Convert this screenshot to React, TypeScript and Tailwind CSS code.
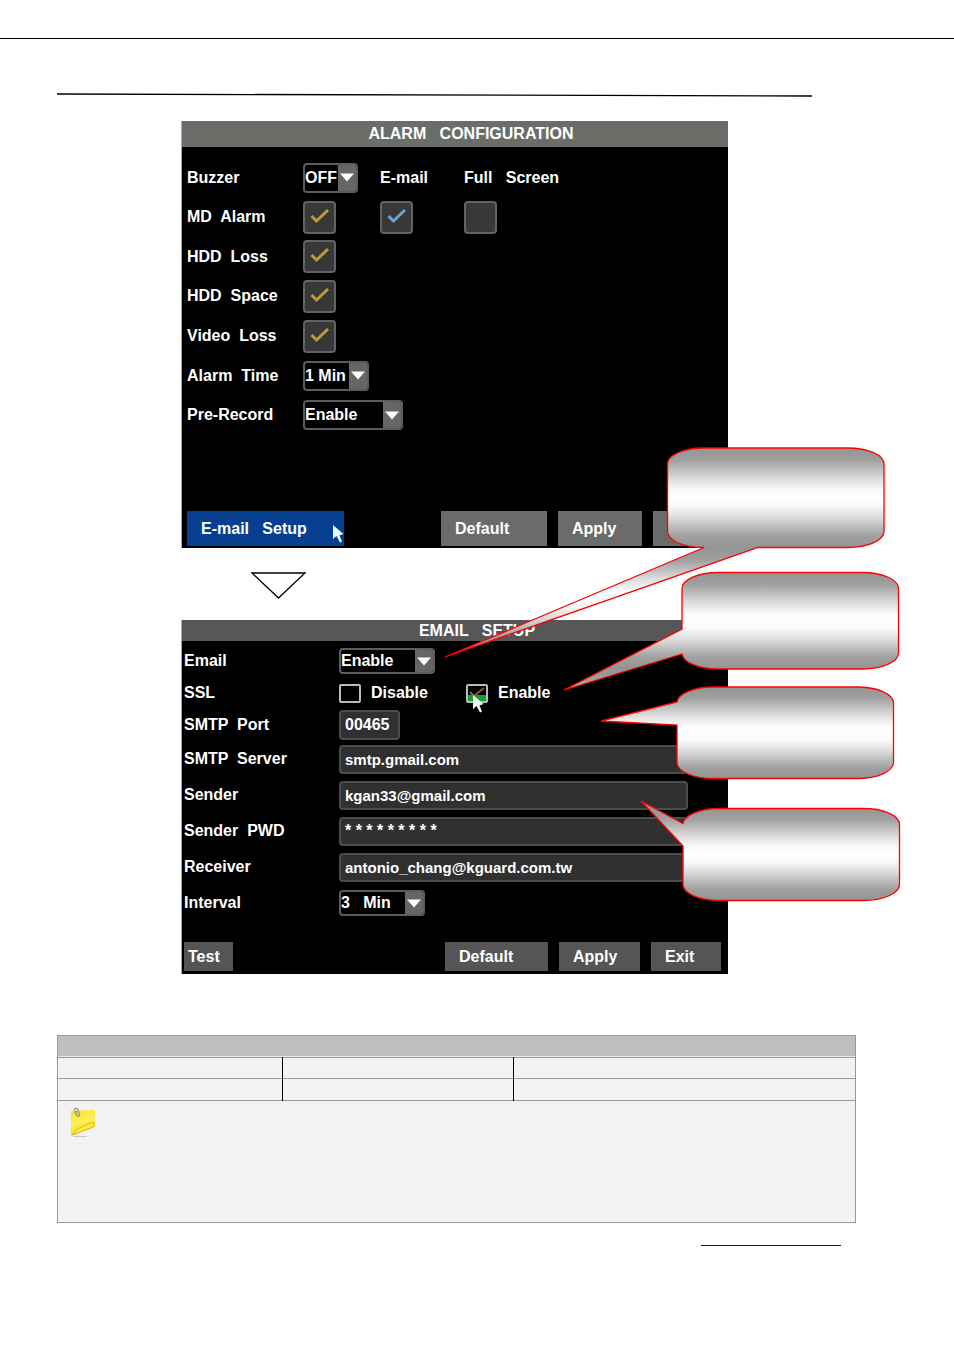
import type { ReactNode } from "react";
import clsx from "clsx";

type SelectBoxProps = {
  id: string;
  value: string;
  className: string;
};

function SelectBox({ id, value, className }: SelectBoxProps) {
  return (
    <div className={clsx("relative overflow-hidden rounded border-2 border-[#5c5c5c] bg-black", className)}>
      <select
        id={id}
        defaultValue={value}
        className="block h-full w-full appearance-none whitespace-pre bg-transparent font-bold text-white outline-none"
      >
        <option value={value}>{value}</option>
      </select>
      <span className="pointer-events-none absolute inset-y-0 right-0 flex w-[18px] items-center justify-center bg-[#666]">
        <svg width="14" height="9" viewBox="0 0 14 9">
          <path d="M0 0.500H14L7 8.500Z" fill="#fff" />
        </svg>
      </span>
    </div>
  );
}

type CheckBoxProps = {
  id: string;
  label?: string;
  checked?: boolean;
  color?: string;
};

function CheckBox({ id, label, checked = true, color = "#bd9a3c" }: CheckBoxProps) {
  return (
    <span className="relative block h-[33px] w-[33px]">
      <input
        id={id}
        type="checkbox"
        aria-label={label}
        defaultChecked={checked}
        className="peer block h-full w-full appearance-none rounded border-2 border-[#636363] bg-[#383838]"
      />
      <svg
        viewBox="0 0 33 33"
        className="pointer-events-none absolute inset-0 hidden peer-checked:block"
        fill="none"
        stroke={color}
        strokeWidth="3"
      >
        <path d="M8.500 15L13.500 20L25 9" />
      </svg>
    </span>
  );
}

function Cursor({ className }: { className: string }) {
  return (
    <svg width="12" height="18" viewBox="0 0 12 18" className={clsx("pointer-events-none absolute", className)}>
      <path d="M1 0V14L4.500 11L8 17.500L10 16.500L7.500 10.500L11.500 9Z" fill="#e4fbf6" />
    </svg>
  );
}

function Panel({ title, titleClass, children }: { title: string; titleClass: string; children: ReactNode }) {
  return (
    <section className="overflow-hidden border-l border-[#aaa] bg-black">
      <h2 className={clsx("flex items-center justify-center whitespace-pre font-bold", titleClass)}>{title}</h2>
      {children}
    </section>
  );
}

const lossRows = [
  { id: "hdd-loss", label: "HDD  Loss" },
  { id: "hdd-space", label: "HDD  Space" },
  { id: "video-loss", label: "Video  Loss" },
];

const alarmRow = "grid grid-cols-[116px_77px_84px_1fr] items-center whitespace-pre";

function AlarmPanel() {
  return (
    <Panel title="ALARM   CONFIGURATION" titleClass="h-[26px] bg-[#6b6d69] pl-8">
      <div className="mt-[11px] grid h-[277px] grid-rows-7 pl-[5px]">
        <div className={alarmRow}>
          <label htmlFor="buzzer">Buzzer</label>
          <SelectBox id="buzzer" value="OFF" className="h-[30px] w-[55px]" />
          <span>E-mail</span>
          <span>Full   Screen</span>
        </div>
        <div className={alarmRow}>
          <label htmlFor="md-alarm">MD  Alarm</label>
          <CheckBox id="md-alarm" />
          <CheckBox id="md-email" label="E-mail" color="#6aa6dc" />
          <CheckBox id="md-full" label="Full Screen" checked={false} />
        </div>
        {lossRows.map((row) => (
          <div key={row.id} className={alarmRow}>
            <label htmlFor={row.id}>{row.label}</label>
            <CheckBox id={row.id} />
          </div>
        ))}
        <div className={alarmRow}>
          <label htmlFor="alarm-time">Alarm  Time</label>
          <SelectBox id="alarm-time" value="1 Min" className="h-[30px] w-[66px]" />
        </div>
        <div className={alarmRow}>
          <label htmlFor="pre-record">Pre-Record</label>
          <SelectBox id="pre-record" value="Enable" className="h-[30px] w-[100px]" />
        </div>
      </div>
      <div className="mt-[76px] mb-0.5 flex h-[35px] gap-[11px] pr-[7px] pl-[5px]">
        <button className="relative mr-auto w-[157px] whitespace-pre bg-[#063f90] pl-3.5 text-left">
          E-mail   Setup
          <Cursor className="top-3.5 right-0" />
        </button>
        <button className="w-[106px] bg-[#6b6b6b] pl-3.5 text-left">Default</button>
        <button className="w-[84px] bg-[#6b6b6b] pl-3.5 text-left">Apply</button>
        <button className="w-[68px] bg-[#6b6b6b] pl-3.5 text-left">Exit</button>
      </div>
    </Panel>
  );
}

const textRows = [
  { id: "server", label: "SMTP  Server", value: "smtp.gmail.com", size: "text-[15px]" },
  { id: "sender", label: "Sender", value: "kgan33@gmail.com", size: "text-[15px]" },
  { id: "password", label: "Sender  PWD", value: "* * * * * * * * *", size: "text-base" },
  { id: "receiver", label: "Receiver", value: "antonio_chang@kguard.com.tw", size: "text-[15px]" },
];

const emailRow = "grid grid-cols-[155px_1fr] items-center whitespace-pre";
const field = "rounded border-2 border-[#4c4c4c] bg-[#303030] pl-1 font-bold text-white outline-none";

function EmailPanel() {
  return (
    <Panel title="EMAIL   SETUP" titleClass="h-[21px] bg-[#575757] pl-11">
      <div className="mt-1 pl-0.5">
        <div className={clsx(emailRow, "h-8")}>
          <label htmlFor="email">Email</label>
          <SelectBox id="email" value="Enable" className="h-[26px] w-[96px]" />
        </div>
        <div className={clsx(emailRow, "h-8")} role="radiogroup" aria-label="SSL">
          <span>SSL</span>
          <div className="flex items-center">
            <label className="flex w-[127px] items-center gap-2.5">
              <input type="radio" name="ssl" className="h-[19px] w-[22px] appearance-none rounded-xs border-2 border-[#bbb]" />
              Disable
            </label>
            <label className="relative flex items-center gap-2.5">
              <input
                type="radio"
                name="ssl"
                defaultChecked
                className="h-[19px] w-[22px] appearance-none rounded-xs border-2 border-[#bbb] bg-linear-to-b from-black from-60% to-[#16a02b] to-60%"
              />
              <svg width="22" height="19" className="pointer-events-none absolute left-0" fill="none" strokeWidth="2">
                <path d="M4 8L8 12" stroke="#4a7182" />
                <path d="M8 12L18 4" stroke="#a14b4b" />
              </svg>
              <Cursor className="top-3 left-1.5" />
              Enable
            </label>
          </div>
        </div>
        <div className={clsx(emailRow, "h-8")}>
          <label htmlFor="port">SMTP  Port</label>
          <input id="port" defaultValue="00465" className={clsx(field, "h-[30px] w-[61px] text-base")} />
        </div>
        {textRows.map((row) => (
          <div key={row.id} className={clsx(emailRow, "h-9")}>
            <label htmlFor={row.id}>{row.label}</label>
            <input id={row.id} defaultValue={row.value} className={clsx(field, row.size, "h-[29px] w-[349px]")} />
          </div>
        ))}
        <div className={clsx(emailRow, "h-9")}>
          <label htmlFor="interval">Interval</label>
          <SelectBox id="interval" value={"3\u00a0\u00a0\u00a0Min"} className="h-[26px] w-[86px]" />
        </div>
      </div>
      <div className="mt-[21px] mb-[3px] flex h-[29px] gap-[11px] pr-[7px] pl-0.5">
        <button className="mr-auto w-[49px] bg-[#555] pl-1 text-left">Test</button>
        <button className="w-[103px] bg-[#555] pl-3.5 text-left">Default</button>
        <button className="w-[81px] bg-[#555] pl-3.5 text-left">Apply</button>
        <button className="w-[70px] bg-[#555] pl-3.5 text-left">Exit</button>
      </div>
    </Panel>
  );
}

// speech balloons pointing at the e-mail fields
const balloons = [
  {
    top: 448,
    bottom: 548,
    d: "M703 448H848A36 16 0 0 1 884 464V531A36 16 0 0 1 848 547.500H758L445 657L704 547.500A36 16 0 0 1 667.500 531V464A36 16 0 0 1 703 448Z",
  },
  {
    top: 573,
    bottom: 669,
    d: "M718 572.500H862A36 16 0 0 1 898.500 589V653A36 16 0 0 1 862 669H718A36 16 0 0 1 682 654L564 690L682 629V589A36 16 0 0 1 718 572.500Z",
  },
  {
    top: 687,
    bottom: 779,
    d: "M713 687H857A36 16 0 0 1 893.500 703V763A36 16 0 0 1 857 778.500H713A36 16 0 0 1 677 763V725L601 721L677 702A36 16 0 0 1 713 687Z",
  },
  {
    top: 808,
    bottom: 900,
    d: "M719 808.500H863A36 16 0 0 1 899.500 824V884A36 16 0 0 1 863 900.500H719A36 16 0 0 1 683 884V846L641 801L683 823.500A36 16 0 0 1 719 808.500Z",
  },
];

function Balloons() {
  return (
    <svg width="720" height="860" viewBox="181 121 720 860" className="pointer-events-none absolute top-0 left-0 max-w-none">
      {balloons.map((b) => (
        <g key={b.top}>
          <linearGradient
            id={`shade-${b.top}`}
            gradientUnits="userSpaceOnUse"
            x1="0"
            x2="0"
            y1={b.top}
            y2={b.bottom}
            spreadMethod="repeat"
          >
            <stop offset="0" stopColor="#949494" />
            <stop offset="0.12" stopColor="#a0a0a0" />
            <stop offset="0.3" stopColor="#dadada" />
            <stop offset="0.42" stopColor="#fafafa" />
            <stop offset="0.5" stopColor="#fff" />
            <stop offset="0.58" stopColor="#fafafa" />
            <stop offset="0.7" stopColor="#dadada" />
            <stop offset="0.88" stopColor="#a0a0a0" />
            <stop offset="1" stopColor="#949494" />
          </linearGradient>
          <path d={b.d} fill={`url(#shade-${b.top})`} stroke="#f00" strokeWidth="1.3" />
        </g>
      ))}
    </svg>
  );
}

function NoteIcon() {
  return (
    <svg width="28" height="32" viewBox="0 0 28 32">
      <defs>
        <linearGradient id="note" x1="0" y1="0" x2="0.3" y2="1">
          <stop offset="0" stopColor="#f9e313" />
          <stop offset="0.55" stopColor="#fdf05e" />
          <stop offset="1" stopColor="#f5cf05" />
        </linearGradient>
      </defs>
      <path d="M3 29.500H17" stroke="#c8c8c8" />
      <path d="M1 4L25 3V20L1 29Z" fill="url(#note)" />
      <path d="M2 28L9 21L22 15.500C25 15 25 19 22 20.500Z" fill="#fbe94a" stroke="#e3b908" />
      <path d="M4 3C5 0.500 8 1 8 3L9.500 8C9 10 7 9.500 6.500 7.500L5.500 4.500M3.500 5L7 4" fill="none" stroke="#8d8d78" strokeWidth="1.200" />
    </svg>
  );
}

export default function App() {
  return (
    <div className="min-h-screen bg-white pt-[38px] font-['Liberation_Sans',sans-serif]">
      <hr className="border-t border-black" />
      <main className="mt-[54px] pr-[98px] pl-[57px]">
        <svg viewBox="0 0 755 4" preserveAspectRatio="none" className="block h-1 w-[755px] max-w-full">
          <path d="M0 1L755 3" stroke="#000" strokeWidth="1.300" />
        </svg>

        <div className="relative mt-6 ml-[124px] w-[547px] text-base leading-5 font-bold text-white">
          <AlarmPanel />
          <div className="h-[72px] pt-6 pl-[70px]">
            <svg width="56" height="28" viewBox="0 0 56 28" fill="#fff" stroke="#000" strokeWidth="1.300">
              <path d="M1 1H54L27.500 26Z" />
            </svg>
          </div>
          <EmailPanel />
          <Balloons />
        </div>

        <table className="mt-[61px] w-full table-fixed border-collapse border border-[#999] bg-[#f2f2f2]">
          <colgroup>
            <col className="w-[225px]" />
            <col className="w-[231px]" />
            <col />
          </colgroup>
          <tbody>
            <tr className="h-[22px] border-b border-[#999] bg-[#bfbfbf]">
              <td colSpan={3} className="shadow-[inset_0_-1px_#e8e8e8]" />
            </tr>
            <tr className="h-[21px] border-b border-[#999]">
              <td className="border-r border-r-black" />
              <td className="border-r border-r-black" />
              <td />
            </tr>
            <tr className="h-[22px] border-b border-[#999]">
              <td className="border-r border-r-black" />
              <td className="border-r border-r-black" />
              <td />
            </tr>
            <tr className="h-[122px]">
              <td colSpan={3} className="pt-1.5 pl-3 align-top">
                <NoteIcon />
              </td>
            </tr>
          </tbody>
        </table>
        <hr className="mt-[22px] mr-[15px] ml-auto w-[140px] border-t border-[#00f]" />
      </main>
    </div>
  );
}
